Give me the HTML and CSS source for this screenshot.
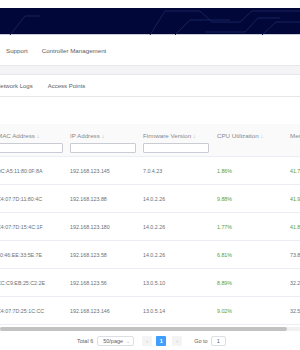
FILE: index.html
```html
<!DOCTYPE html>
<html>
<head>
<meta charset="utf-8">
<link rel="stylesheet" href="styles.css">
</head>
<body>
<div class="page">
  <div class="topstrip"></div>
  <div class="banner">
    <svg class="circuit" width="300" height="27" viewBox="0 0 300 27">
      <g fill="none" stroke="#16225e" stroke-width="1">
        <polyline points="10,27 25,8 40,8"/>
        <polyline points="150,27 165,3 200,3 212,14 240,14 252,3 300,3"/>
        <polyline points="175,27 190,12 230,12"/>
        <polyline points="205,24 245,24 258,10 280,10"/>
        <polyline points="262,27 276,14 300,14"/>
      </g>
    </svg>
  </div>
  <div class="nav">
    <span class="nav-item">Support</span>
    <span class="nav-item">Controller Management</span>
  </div>
  <div class="band"></div>
  <div class="tabs">
    <span class="tab first">Network Logs</span>
    <span class="tab">Access Points</span>
  </div>
  <div class="table">
    <div class="thead">
      <div class="th"><span class="label">MAC Address <i>↓</i></span><span class="filter"></span></div>
      <div class="th"><span class="label">IP Address <i>↓</i></span><span class="filter"></span></div>
      <div class="th"><span class="label">Firmware Version <i>↓</i></span><span class="filter"></span></div>
      <div class="th"><span class="label">CPU Utilization <i>↓</i></span><span class="nofilter"></span></div>
      <div class="th"><span class="label">Memory Utilization <i>↓</i></span><span class="nofilter"></span></div>
    </div>
    <div class="tr"><div class="td">DC:A5:11:80:0F:8A</div><div class="td">192.168.123.145</div><div class="td">7.0.4.23</div><div class="td ok">1.86%</div><div class="td ok">41.73%</div></div>
    <div class="tr"><div class="td">C4:07:7D:11:80:4C</div><div class="td">192.168.123.88</div><div class="td">14.0.2.26</div><div class="td ok">9.88%</div><div class="td ok">41.92%</div></div>
    <div class="tr"><div class="td">C4:07:7D:15:4C:1F</div><div class="td">192.168.123.180</div><div class="td">14.0.2.26</div><div class="td ok">1.77%</div><div class="td ok">41.85%</div></div>
    <div class="tr"><div class="td">80:46:EE:33:5E:7E</div><div class="td">192.168.123.58</div><div class="td">14.0.2.26</div><div class="td ok">6.81%</div><div class="td">73.82%</div></div>
    <div class="tr"><div class="td">CC:C9:EB:25:C2:2E</div><div class="td">192.168.123.56</div><div class="td">13.0.5.10</div><div class="td ok">8.89%</div><div class="td">32.21%</div></div>
    <div class="tr"><div class="td">C4:07:7D:25:1C:CC</div><div class="td">192.168.123.146</div><div class="td">13.0.5.14</div><div class="td ok">9.02%</div><div class="td">32.56%</div></div>
  </div>
  <div class="scrollbar"><div class="thumb"></div></div>
  <div class="pager">
    <span class="total">Total 6</span>
    <span class="size">50/page <span class="caret">⌄</span></span>
    <span class="pbtn">‹</span>
    <span class="pbtn active">1</span>
    <span class="pbtn">›</span>
    <span class="goto">Go to</span>
    <span class="goinput">1</span>
  </div>
</div>
</body>
</html>
```
FILE: styles.css
```css
html, body {
  margin: 0;
  padding: 0;
  background: #ffffff;
}
.page {
  width: 300px;
  height: 350px;
  overflow: hidden;
  font-family: "Liberation Sans", Arial, sans-serif;
  font-size: 6px;
  color: #606266;
}
.topstrip {
  height: 8px;
  background: #ffffff;
}
.banner {
  height: 27px;
  background: #02073a;
  border-bottom: 1px solid #c9ccd8;
  box-sizing: border-box;
}
.circuit {
  display: block;
}
.nav {
  height: 30px;
  display: flex;
  align-items: center;
  gap: 14px;
  padding-left: 6px;
  color: #5a5e66;
  font-size: 6.2px;
}
.band {
  height: 10px;
  background: #f4f4f6;
  border-top: 1px solid #e6e7eb;
  border-bottom: 1px solid #e6e7eb;
  box-sizing: border-box;
}
.tabs {
  height: 22px;
  display: flex;
  align-items: center;
  gap: 15px;
  border-bottom: 1px solid #e6e7eb;
  box-sizing: border-box;
  color: #5a5e66;
  font-size: 6px;
}
.tab.first {
  margin-left: -4px;
}
.table {
  margin-top: 27px;
  margin-left: -6px;
  width: 380px;
}
.thead, .tr {
  display: grid;
  grid-template-columns: 73px 73px 74px 73px 73px;
}
.thead {
  height: 33px;
  background: #fafafa;
  border-bottom: 1px solid #ebeef5;
  box-sizing: border-box;
}
.th {
  padding: 8px 3px 0 3px;
  display: flex;
  flex-direction: column;
  gap: 3px;
  color: #85898f;
  font-size: 6.2px;
}
.th i {
  font-style: normal;
  color: #b8bcc4;
}
.label {
  height: 8px;
  line-height: 8px;
  white-space: nowrap;
}
.filter {
  height: 10px;
  width: 66px;
  border: 1px solid #c9ccd3;
  border-radius: 1px;
  background: #fff;
  box-sizing: border-box;
}
.nofilter {
  height: 10px;
}
.tr {
  height: 28px;
  border-bottom: 1px solid #ebeef5;
  box-sizing: border-box;
  align-items: center;
}
.td {
  padding-left: 3px;
  white-space: nowrap;
  color: #6b6f75;
  font-size: 5.3px;
}
.td.ok {
  color: #56a040;
}
.scrollbar {
  margin-top: 2px;
  height: 4px;
  background: #f1f1f1;
}
.thumb {
  width: 287px;
  height: 4px;
  background: #c2c2c2;
  border-radius: 2px;
}
.pager {
  margin-top: 4px;
  height: 12px;
  display: flex;
  align-items: center;
  padding-left: 77px;
  font-size: 5.5px;
  color: #606266;
}
.total {
  margin-right: 4px;
}
.size {
  width: 37px;
  height: 10px;
  border: 1px solid #dcdfe6;
  border-radius: 2px;
  box-sizing: border-box;
  display: flex;
  align-items: center;
  justify-content: space-between;
  padding: 0 3px 0 5px;
  color: #606266;
  margin-right: 8px;
}
.caret {
  color: #b0b3b8;
  font-size: 5px;
}
.pbtn {
  width: 10px;
  height: 10px;
  background: #f4f4f5;
  color: #c0c4cc;
  display: flex;
  align-items: center;
  justify-content: center;
  margin-right: 4px;
  border-radius: 1px;
}
.pbtn.active {
  background: #409eff;
  color: #fff;
  font-weight: bold;
  margin-right: 6px;
}
.goto {
  margin-left: 8px;
  margin-right: 3px;
}
.goinput {
  width: 15px;
  height: 10px;
  border: 1px solid #dcdfe6;
  border-radius: 2px;
  box-sizing: border-box;
  display: flex;
  align-items: center;
  justify-content: center;
}
```
